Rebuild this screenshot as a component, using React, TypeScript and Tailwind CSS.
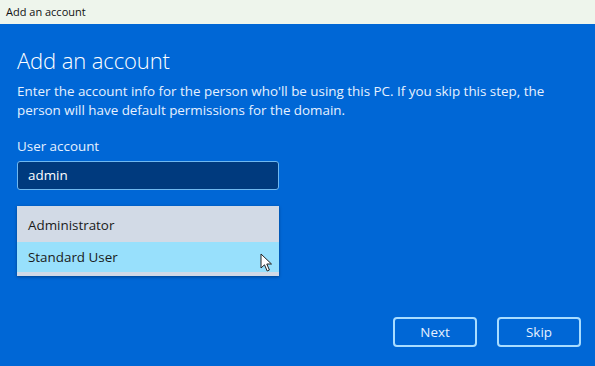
import React from 'react'

const font = { fontFamily: '"Open Sans", "Noto Sans", sans-serif' }

// mouse pointer drawn as a simple arrow
const Pointer = () => (
  <svg width="14" height="20" viewBox="0 0 14 20" className="absolute left-[243px] top-[47px]">
    <path d="M1 1 L1 15 L4.5 11.8 L7.2 18 L9.4 17 L6.8 11 L11.5 11 Z" fill="#ffffff" stroke="#222222" strokeWidth="1" strokeLinejoin="round" />
  </svg>
)

export default function App() {
  return (
    <div className="w-[595px] h-[366px] flex flex-col bg-[#0067d6] overflow-hidden" style={font}>
      <div className="h-[24px] shrink-0 bg-[#eef5ec] flex items-center px-[6px] text-[11px] text-[#111]">
        Add an account
      </div>
      <div className="flex-1 flex flex-col px-[17px] text-white">
        <h1 className="mt-[21px] text-[22px] font-light leading-[30px] tracking-[-0.1px]">Add an account</h1>
        <p className="mt-[7px] text-[13.4px] leading-[19px] text-[#e6f1ff] w-[560px]">
          Enter the account info for the person who'll be using this PC. If you skip this step, the person will have default permissions for the domain.
        </p>
        <label className="mt-[17px] text-[13.4px] leading-[18px] text-[#e6f1ff]">User account</label>
        <div className="mt-[6px] w-[262px] h-[29px] rounded-[3px] border border-[#6fb8f0] bg-[#003a7e] flex items-center px-[10px] text-[13.4px] text-white">
          admin
        </div>
        <div className="relative mt-[16px] w-[262px] bg-[#d2dae6] pt-[2px] pb-[4px] shadow-[0_1px_3px_rgba(0,0,0,0.35)]">
          <div className="h-[34px] flex items-center px-[11px] text-[13.4px] text-[#1a1a1a]">Administrator</div>
          <div className="h-[30px] flex items-center px-[11px] text-[13.4px] text-[#1a1a1a] bg-[#98e0fc]">Standard User</div>
          <Pointer />
        </div>
        <div className="flex-1" />
        <div className="flex justify-end gap-[20px] mb-[19px] mr-[-3px]">
          <button className="w-[84px] h-[30px] rounded-[4px] border-2 border-[#a8dcff] text-[13.4px] font-medium text-[#e6f1ff]">Next</button>
          <button className="w-[84px] h-[30px] rounded-[4px] border-2 border-[#a8dcff] text-[13.4px] font-medium text-[#e6f1ff]">Skip</button>
        </div>
      </div>
    </div>
  )
}
